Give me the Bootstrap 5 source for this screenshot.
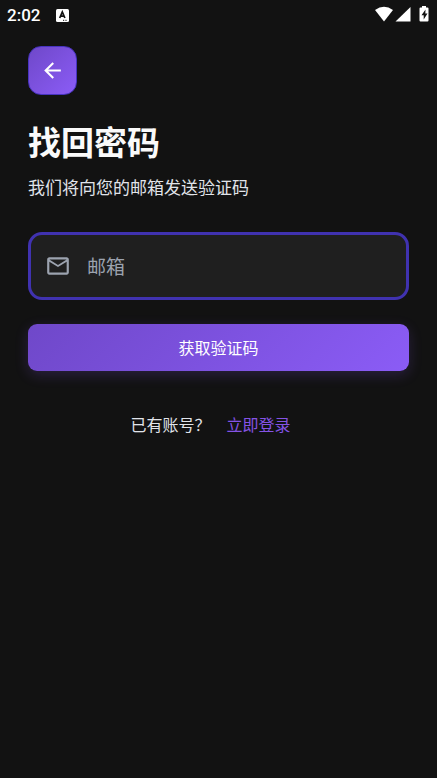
<!DOCTYPE html>
<html lang="zh-CN" data-bs-theme="dark">
<head>
<meta charset="utf-8">
<meta name="viewport" content="width=device-width, initial-scale=1">
<title>找回密码</title>
<link href="https://cdn.jsdelivr.net/npm/bootstrap@5.3.0/dist/css/bootstrap.min.css" rel="stylesheet">
<style>
  body { background: #121212; color: #e1e4ea; font-family: Roboto, "Noto Sans CJK SC", sans-serif; font-size: 16px; line-height: 24px; }
  .status-bar { height: 30px; padding: 0 7px; color: #fff; }
  .status-time { font-size: 17px; font-weight: 500; }
  .page-body { padding: 16px 28px; }
  .back-btn { width: 49px; height: 49px; border: 1px solid #4733c0; border-radius: 13px; background: linear-gradient(135deg, #6f48c9, #8b5cf6); }
  .page-title { font-size: 33px; line-height: 48px; color: #fafafa; margin: 25px 0 8px; }
  .page-note { font-size: 17px; line-height: 24px; margin-bottom: 32px; }
  .mail-field { height: 68px; border: 3px solid #4032b0; border-radius: 14px; background: #1f1f1f; padding: 0 14px; margin-bottom: 24px; }
  .mail-field svg { color: #9ca3af; }
  .mail-field .form-control { font-size: 19px; line-height: 28px; color: #e1e4ea; padding: 3px 0 0; }
  .mail-field .form-control::placeholder { color: #9ca3af; opacity: 1; }
  .send-btn { height: 47px; border-radius: 9px; color: #fff; background: linear-gradient(135deg, #6f48c9, #8b5cf6); box-shadow: 0 4px 14px rgba(139, 92, 246, .2); padding: 2px 0 0; }
  .login-row { margin-top: 43px; }
  .login-link { color: #8453e4; }
</style>
</head>
<body>
<header class="status-bar d-flex align-items-center justify-content-between">
  <div class="d-flex align-items-center gap-3">
    <span class="status-time">2:02</span>
    <svg width="13" height="13" viewBox="0 0 13 13" aria-hidden="true"><rect width="13" height="13" rx="1.5" fill="#fff"/><path d="M3.700 9 6.300 3 8.900 9M4.500 7.200h3.600" fill="none" stroke="#121212" stroke-width="1.700"/><path d="M7 11.300h1.200M9.400 11.300h1.200" stroke="#121212"/></svg>
  </div>
  <div class="d-flex align-items-center">
    <svg width="55" height="18" viewBox="0 0 55 18" aria-hidden="true">
      <path d="M0 4Q9-2.500 18 4L9 15.500Z" fill="#fff"/>
      <path d="M35.500 1v14.500H20.500Z" fill="#fff"/>
      <path d="M47 0h4v1.500h1.500q1 0 1 1v12q0 1-1 1h-7q-1 0-1-1v-12q0-1 1-1H47Z" fill="#fff"/>
      <path d="M50.500 3.500 46.500 9.300h2.200v4.200l3.800-6h-2.200Z" fill="#121212"/>
    </svg>
  </div>
</header>
<main class="page-body">
  <button type="button" class="back-btn btn p-0 d-flex align-items-center justify-content-center" aria-label="返回">
    <svg width="25" height="25" viewBox="0 0 24 24" fill="#fff" aria-hidden="true"><path d="M20 11H7.830l5.590-5.590L12 4l-8 8 8 8 1.410-1.410L7.830 13H20z"/></svg>
  </button>
  <h1 class="page-title fw-bold">找回密码</h1>
  <p class="page-note">我们将向您的邮箱发送验证码</p>
  <form>
    <div class="mail-field d-flex align-items-center gap-3">
      <label for="email" class="d-flex" aria-label="邮箱">
        <svg width="26" height="26" viewBox="0 0 24 24" fill="currentColor" aria-hidden="true"><path d="M22 6c0-1.100-.9-2-2-2H4c-1.100 0-2 .9-2 2v12c0 1.100.9 2 2 2h16c1.100 0 2-.9 2-2zm-2 0-8 5-8-5zm0 12H4V8l8 5 8-5z"/></svg>
      </label>
      <input id="email" type="email" class="form-control border-0 bg-transparent shadow-none" placeholder="邮箱">
    </div>
    <button type="button" class="send-btn btn w-100 border-0">获取验证码</button>
  </form>
  <div class="login-row d-flex justify-content-center">
    <span>已有账号？</span>
    <a href="#" class="login-link px-3 text-decoration-none">立即登录</a>
  </div>
</main>
<script src="https://cdn.jsdelivr.net/npm/bootstrap@5.3.0/dist/js/bootstrap.bundle.min.js"></script>
</body>
</html>
